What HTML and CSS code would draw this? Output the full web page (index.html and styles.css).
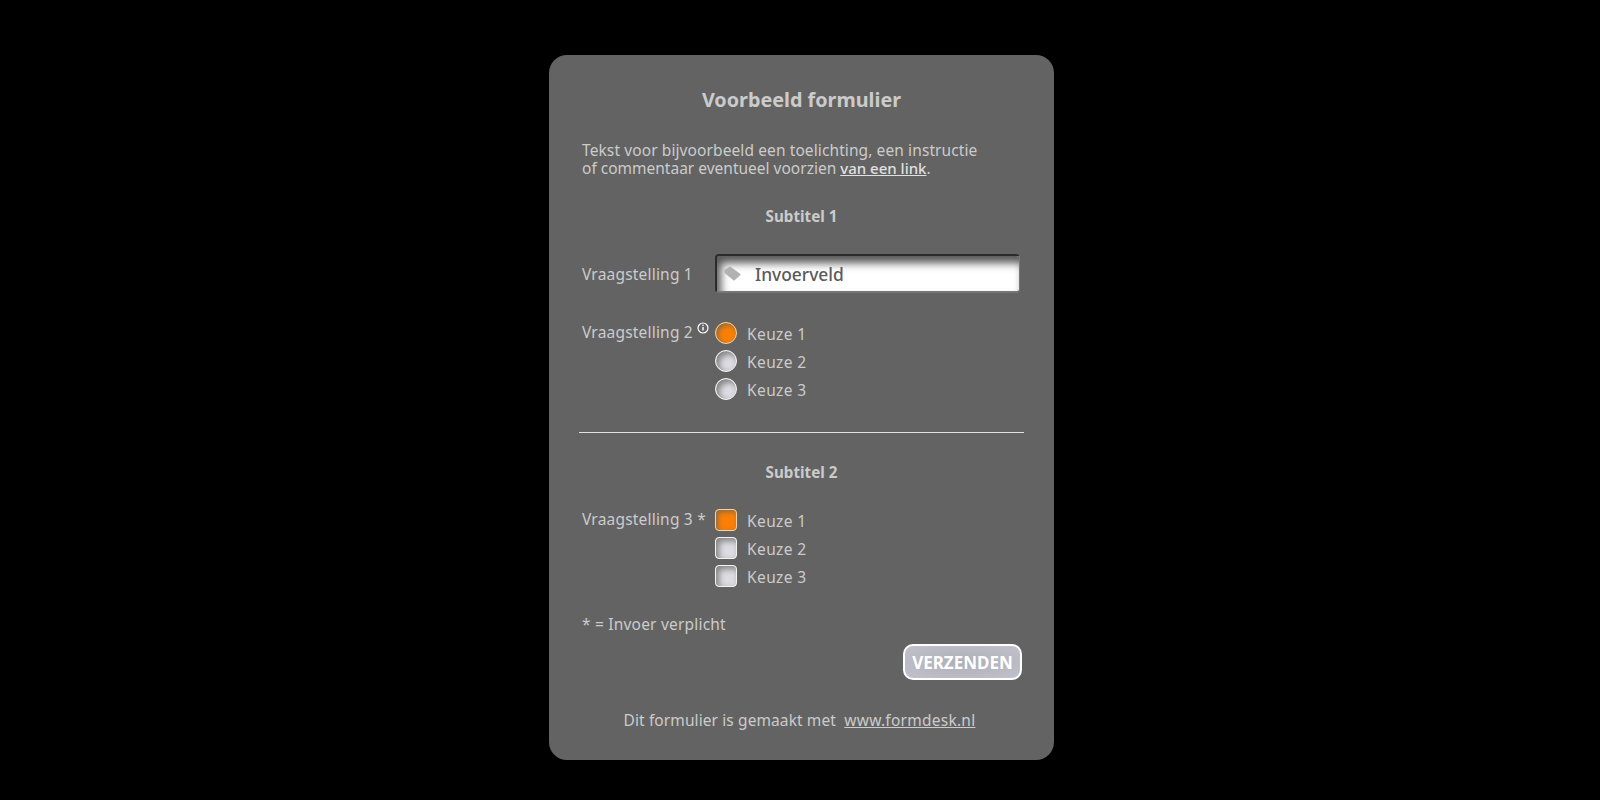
FILE: index.html
```html
<!DOCTYPE html>
<html lang="nl">
<head>
  <meta charset="UTF-8" />
  <title>Voorbeeld formulier</title>
  <link rel="stylesheet" href="styles.css">
</head>
<body>
  <main class="form-card">
    <h1 class="form-title">Voorbeeld formulier</h1>
    <p class="intro"><span class="intro-first">Tekst voor bijvoorbeeld een toelichting, een instructie</span><br>of commentaar eventueel voorzien <a href="#" class="intro-link">van een link</a>.</p>

    <h2 class="subtitle">Subtitel 1</h2>

    <div class="row row-input">
      <label class="question">Vraagstelling 1</label>
      <div class="text-field">
        <svg class="tag-icon" viewBox="0 0 17 15" width="17" height="15">
          <path d="M1.500 4.500 6 1.500 15.500 8.500 10 13.500 1.500 6.500z" fill="#b2b2b2" stroke="#b2b2b2" stroke-width="2" stroke-linejoin="round"/>
        </svg>
        <span class="field-value">Invoerveld</span>
      </div>
    </div>

    <div class="row row-radios">
      <div class="question question-choices">Vraagstelling 2
        <svg class="info-icon" viewBox="0 0 12 12" width="12" height="12">
          <circle cx="6" cy="6" r="5" fill="none" stroke="#fff" stroke-width="1.200"/>
          <path d="M6 5v3.500M6 2.800v1.300" stroke="#fff" stroke-width="1.400"/>
        </svg>
      </div>
      <div class="choices">
        <div class="choice"><span class="mark radio checked"></span><span class="choice-label">Keuze 1</span></div>
        <div class="choice"><span class="mark radio"></span><span class="choice-label">Keuze 2</span></div>
        <div class="choice"><span class="mark radio"></span><span class="choice-label">Keuze 3</span></div>
      </div>
    </div>

    <hr class="divider">

    <h2 class="subtitle subtitle-second">Subtitel 2</h2>

    <div class="row row-boxes">
      <div class="question question-choices">Vraagstelling 3 *</div>
      <div class="choices">
        <div class="choice"><span class="mark box checked"></span><span class="choice-label">Keuze 1</span></div>
        <div class="choice"><span class="mark box"></span><span class="choice-label">Keuze 2</span></div>
        <div class="choice"><span class="mark box"></span><span class="choice-label">Keuze 3</span></div>
      </div>
    </div>

    <p class="required-note">* = Invoer verplicht</p>

    <div class="actions">
      <button type="button" class="submit">VERZENDEN</button>
    </div>

    <p class="made-with">Dit formulier is gemaakt met &nbsp;<a href="#">www.formdesk.nl</a></p>
  </main>
</body>
</html>
```

FILE: styles.css
```css
html, body {
  margin: 0;
  height: 100%;
}

body {
  background-color: black;
  color: #cbcbcb;
  font-family: 'Noto Sans', sans-serif;
  font-size: 16px;
  overflow: hidden;
}

.form-card {
  box-sizing: border-box;
  width: 505px;
  height: 705px;
  margin: 55px 0 0 549px;
  padding: 33px 33px 0;
  background-color: #636363;
  border-radius: 18px;
}

.form-title {
  margin: 0;
  text-align: center;
  font-size: 19.800px;
  line-height: 24px;
  font-weight: bold;
}

.intro {
  margin: 29px 0 0;
  font-size: 15.500px;
  line-height: 18px;
}

.intro-first {
  letter-spacing: 0.1px;
}

.intro-link {
  color: #e0e0e0;
  font-size: 15px;
  font-weight: 500;
}

.subtitle {
  margin: 29px 0 0;
  text-align: center;
  font-size: 15.200px;
  line-height: 20px;
  font-weight: bold;
}

.row {
  display: flex;
}

.row-input {
  align-items: center;
  margin-top: 28px;
}

.row-radios {
  margin-top: 29px;
}

.row-boxes {
  margin-top: 27px;
}

.question {
  width: 133px;
  flex-shrink: 0;
  font-size: 15.500px;
  line-height: 22px;
  letter-spacing: 0.2px;
  white-space: nowrap;
}

.row-input .question {
  padding-top: 1px;
}

.question-choices {
  margin-top: -1px;
}

.info-icon {
  vertical-align: 4px;
}

.text-field {
  box-sizing: border-box;
  display: flex;
  align-items: center;
  gap: 14px;
  width: 305px;
  height: 39px;
  padding-left: 7px;
  border-radius: 4px;
  border-top: 2px solid #2b2b2b;
  border-left: 2px solid #2b2b2b;
  border-bottom: 2px solid #777;
  border-right: 1px solid #777;
  background-color: white;
  box-shadow: inset 4px 7px 8px #555;
  color: #5a5a5a;
  font-size: 17.400px;
  font-weight: 500;
}

.field-value {
  padding-top: 1px;
}

.tag-icon {
  flex-shrink: 0;
}

.choices {
  display: flex;
  flex-direction: column;
  gap: 6px;
}

.choice {
  display: flex;
  align-items: center;
  gap: 10px;
  height: 22px;
}

.choice-label {
  padding-top: 3px;
  font-size: 15.500px;
  line-height: 19px;
  letter-spacing: 0.4px;
}

.mark {
  box-sizing: border-box;
  display: block;
  width: 22px;
  height: 22px;
  border: 1.500px solid #f2f2f2;
  background-color: #dcdce2;
  box-shadow: inset 3px 3px 6px #808080;
}

.radio {
  border-radius: 50%;
}

.box {
  border-radius: 4px;
}

.mark.checked {
  border-color: #f3d3a8;
  background-color: #fb7f05;
  box-shadow: inset 2px 2px 5px #8a6a44;
}

.divider {
  height: 1px;
  margin: 32px -3px 0;
  border: none;
  background-color: #e2e2e2;
}

.required-note {
  margin: 26px 0 0;
  font-size: 15.500px;
  line-height: 22px;
  letter-spacing: 0.2px;
}

.actions {
  display: flex;
  justify-content: flex-end;
  margin: 9px -1px 0 0;
}

.submit {
  box-sizing: border-box;
  width: 119px;
  height: 36px;
  padding: 0;
  border: 2px solid white;
  border-radius: 10px;
  background: radial-gradient(ellipse at center, #aeaeb8, #c2c2cc);
  color: white;
  font-family: 'Noto Sans', sans-serif;
  font-size: 17px;
  font-weight: bold;
}

.made-with {
  margin: 29px 0 0;
  padding-right: 4px;
  text-align: center;
  font-size: 15.500px;
  line-height: 22px;
  letter-spacing: 0.1px;
}

.made-with a {
  color: #cbcbcb;
  letter-spacing: 0.25px;
}
```
